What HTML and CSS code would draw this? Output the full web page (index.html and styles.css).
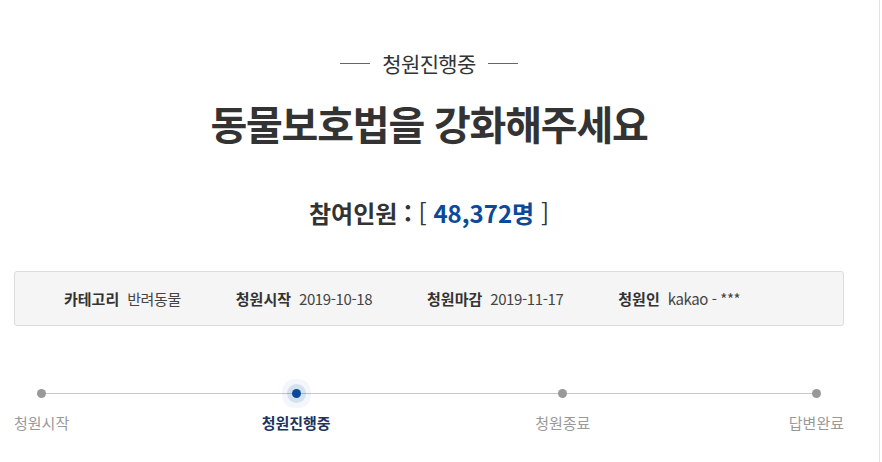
FILE: index.html
```html
<!DOCTYPE html>
<html lang="ko">
<head>
<meta charset="utf-8">
<title>청원</title>
<link rel="stylesheet" href="styles.css">
</head>
<body>
<div class="page">
  <div class="content">
    <div class="status"><span class="dash"></span><span class="status-text">청원진행중</span><span class="dash"></span></div>
    <h1 class="title">동물보호법을 강화해주세요</h1>
    <p class="count"><span class="count-label">참여인원 :</span> <span class="bracket">[</span> <span class="count-num">48,372명</span> <span class="bracket">]</span></p>
    <ul class="info">
      <li class="info-item"><span class="info-label">카테고리</span><span class="info-value">반려동물</span></li>
      <li class="info-item"><span class="info-label">청원시작</span><span class="info-value">2019-10-18</span></li>
      <li class="info-item"><span class="info-label">청원마감</span><span class="info-value">2019-11-17</span></li>
      <li class="info-item"><span class="info-label">청원인</span><span class="info-value">kakao - ***</span></li>
    </ul>
    <ol class="steps">
      <li class="step"><span class="dot"></span><span class="step-label">청원시작</span></li>
      <li class="step step-active"><span class="dot"></span><span class="step-label">청원진행중</span></li>
      <li class="step step-closed"><span class="dot"></span><span class="step-label">청원종료</span></li>
      <li class="step"><span class="dot"></span><span class="step-label">답변완료</span></li>
    </ol>
  </div>
</div>
</body>
</html>
```
FILE: styles.css
```css
* { box-sizing: border-box; }
html, body { margin: 0; padding: 0; background: #fff; }
body {
  font-family: "Noto Sans CJK KR", "Noto Sans", sans-serif;
  color: #333;
  height: 462px;
  overflow: hidden;
}
.page {
  width: 880px;
  height: 462px;
  border-right: 1px solid #e2e2e2;
  padding-left: 14px;
}
.content {
  width: 830px;
  display: flex;
  flex-direction: column;
  align-items: center;
}
.status {
  margin-top: 48px;
  height: 30px;
  display: flex;
  align-items: center;
  gap: 12px;
}
.dash {
  width: 30px;
  height: 1px;
  background: #666;
}
.status-text {
  font-size: 21px;
  line-height: 30px;
  letter-spacing: -0.6px;
  color: #333;
}
.title {
  margin: 20px 0 0;
  font-size: 40px;
  line-height: 50px;
  font-weight: 700;
  letter-spacing: -1.2px;
  color: #333;
  white-space: nowrap;
}
.count {
  margin: 50px 0 0;
  font-size: 24px;
  line-height: 30px;
  font-weight: 700;
  letter-spacing: 0;
  color: #333;
  white-space: pre;
}
.bracket { font-weight: 400; }
.count-num { color: #0b4a9a; }
.info {
  list-style: none;
  margin: 43px 0 0;
  align-self: stretch;
  height: 55px;
  background: #f5f5f5;
  border: 1px solid #dcdcdc;
  border-radius: 3px;
  padding: 0 0 0 49px;
  display: flex;
  align-items: center;
  gap: 55px;
  font-size: 15px;
}
.info-item { display: flex; gap: 8px; }
.info-label { font-weight: 700; color: #333; }
.info-value { color: #444; letter-spacing: -0.4px; }
.steps {
  list-style: none;
  margin: 63px 0 0;
  padding: 0;
  align-self: stretch;
  display: flex;
  justify-content: space-between;
  position: relative;
}
.steps::before {
  content: "";
  position: absolute;
  left: 26px;
  right: 27px;
  top: 4px;
  height: 1px;
  background: #c8c8c8;
}
.step {
  display: flex;
  flex-direction: column;
  align-items: center;
  gap: 15px;
  position: relative;
}
.step-active { margin-right: 12px; }
.step-closed { margin-right: 6px; }
.dot {
  width: 9px;
  height: 9px;
  border-radius: 50%;
  background: #999;
}
.step-active .dot {
  background: #0b4a9a;
  box-shadow: 0 0 0 5px rgba(11, 74, 154, 0.12), 0 0 0 10px rgba(11, 74, 154, 0.05);
}
.step-label {
  font-size: 15px;
  line-height: 20px;
  color: #999;
}
.step-active .step-label {
  font-weight: 700;
  color: #1b3560;
}
```
